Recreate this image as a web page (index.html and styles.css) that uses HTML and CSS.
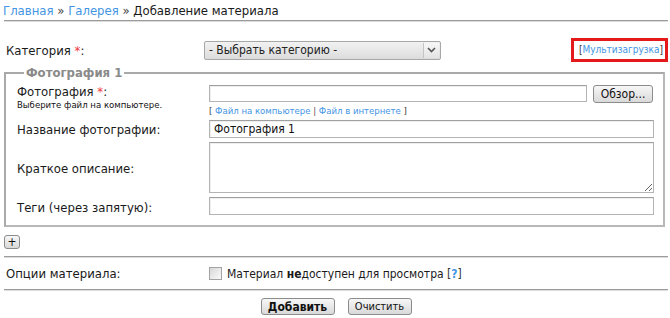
FILE: index.html
```html
<!DOCTYPE html>
<html>
<head>
    <meta charset="UTF-8">
    <title>Добавление материала</title>
    <link rel="stylesheet" href="styles.css">
</head>
<body>
    <div class="page">
        <div class="crumbs">
            <a href="#">Главная</a> <span class="sep">&raquo;</span> <a href="#">Галерея</a> <span class="sep">&raquo;</span> Добавление материала
        </div>
        <div class="rule"></div>

        <div class="cat-row">
            <label class="cat-label">Категория <span class="req">*</span>:</label>
            <div class="select">
                <span class="select-text">- Выбрать категорию -</span>
                <span class="select-arrow">
                    <svg width="9" height="6" viewBox="0 0 9 6"><path d="M1 1 L4.5 4.5 L8 1" fill="none" stroke="#555" stroke-width="1.6"/></svg>
                </span>
            </div>
            <div class="multi"><span class="br">[</span><a href="#">Мультизагрузка</a><span class="br">]</span></div>
        </div>

        <fieldset class="photo">
            <legend>Фотография 1</legend>
            <div class="grid">
                <div class="lbl lbl-top">
                    Фотография <span class="req">*</span>:
                    <div class="hint">Выберите файл на компьютере.</div>
                </div>
                <div class="file-field">
                    <div class="file-line">
                        <input type="text" class="inp file-inp">
                        <button class="btn browse">Обзор...</button>
                    </div>
                    <div class="src-links">
                        <span class="br">[</span> <a href="#">Файл на компьютере</a> <span class="pipe">|</span> <a href="#">Файл в интернете</a> <span class="br">]</span>
                    </div>
                </div>

                <label class="lbl">Название фотографии:</label>
                <input type="text" class="inp" value="Фотография 1">

                <label class="lbl">Краткое описание:</label>
                <textarea class="inp area"></textarea>

                <label class="lbl tags-lbl">Теги (через запятую):</label>
                <input type="text" class="inp tags">
            </div>
        </fieldset>

        <button class="btn plus">+</button>
        <div class="rule"></div>

        <div class="opt-row">
            <span class="opt-label">Опции материала:</span>
            <input type="checkbox" class="chk" id="hidden-mat">
            <label for="hidden-mat" class="opt-text">Материал <b>не</b>доступен для просмотра <span class="br">[</span><a href="#" class="q">?</a><span class="br">]</span></label>
        </div>
        <div class="rule"></div>

        <div class="actions">
            <button class="btn submit">Добавить</button>
            <button class="btn reset">Очистить</button>
        </div>
    </div>
</body>
</html>
```

FILE: styles.css
```css
:root {
    --link: #4395e4;
    --text: #1a1a1a;
    --line: #9c9c9c;
    --field-border: #b4b4b4;
}
body {
    margin: 0;
    font-family: "DejaVu Sans Condensed", "DejaVu Sans", Verdana, sans-serif;
    font-size: 13px;
    color: var(--text);
    background: #fff;
}
a { color: var(--link); text-decoration: none; }
.page { padding: 3px 2px 0 4px; }

.crumbs { line-height: 15px; height: 16px; margin-left: -1px; }
.crumbs .sep { color: #444; }

.rule {
    border-top: 1px solid var(--line);
    border-bottom: 1px solid #dcdcdc;
    margin: 0;
}
.crumbs + .rule { margin-top: 1px; }

.cat-row { display: flex; align-items: center; margin-top: 16px; height: 24px; }
.cat-label { width: 198px; padding-left: 2px; }
.req { color: #f03a3a; }
.select {
    width: 237px; height: 19px; box-sizing: border-box;
    border: 1px solid #a7a7a7; border-radius: 2px;
    background: linear-gradient(#f2f2f2, #dcdcdc);
    display: flex; align-items: center; justify-content: space-between;
    font-size: 12px; color: #222; padding-left: 4px;
}
.select-arrow {
    width: 15px; height: 15px; margin-right: 1px;
    border-left: 1px solid #c4c4c4; background: linear-gradient(#f7f7f7, #e3e3e3);
    display: flex; align-items: center; justify-content: center;
}
.multi {
    margin-left: auto; font-size: 10px;
    border: 3px solid #e41a1a; padding: 3px 2px 4px 5px;
}
.br { color: #333; }

.photo {
    margin: 3px 3px 0 0; padding: 5px 9px 10px 11px;
    border: 2px solid #a9a9a9;
    border-right-color: #b8b8b8; border-bottom-color: #b8b8b8;
}
.photo legend {
    font-weight: bold; color: #8a8a8a; padding: 0 2px; margin-left: 7px; line-height: 15px;
}
.grid {
    display: grid; grid-template-columns: 192px 445px;
    row-gap: 4px; align-items: center;
}
.lbl { padding-top: 1px; }
.lbl-top { align-self: start; line-height: 14px; margin-top: -1px; }
.hint { font-size: 9.5px; line-height: 11px; color: #111; }
.tags, .tags-lbl { margin-top: 2px; }

.inp {
    box-sizing: border-box; height: 18px; width: 100%; margin: 0;
    border: 1px solid var(--field-border); border-top-color: #a0a0a0;
    box-shadow: inset 1px 1px 0 #eee;
    font-family: inherit; font-size: 12px; padding: 0 4px; color: #111;
}
.area { height: 51px; resize: vertical; }
.file-line { display: flex; gap: 6px; }
.file-inp { width: 378px; height: 17px; }
.src-links { font-size: 9.5px; margin-top: 2px; line-height: 11px; }
.pipe { color: #555; }

.btn {
    font-family: inherit; color: #111;
    border: 1px solid #8c8c8c; border-radius: 3px;
    background: linear-gradient(#f7f7f7, #d9d9d9);
    padding: 0; cursor: pointer;
}
.browse { width: 60px; height: 18px; font-size: 12px; }
.plus { display: block; width: 16px; height: 14px; font-size: 12px; line-height: 10px; margin: 8px 0 7px 0; }

.opt-row { display: flex; align-items: center; height: 31px; }
.opt-label { width: 203px; padding-left: 2px; }
.chk {
    appearance: none; width: 13px; height: 13px; margin: 0 5px 0 0;
    border: 1px solid #a3a3a3; background: linear-gradient(135deg, #d8d8d8, #fafafa);
}
.opt-text { font-size: 12px; }
.q { font-weight: bold; }

.actions { display: flex; justify-content: center; gap: 13px; margin-top: 7px; }
.submit { width: 74px; height: 17px; font-weight: bold; font-size: 12px; }
.reset { width: 64px; height: 17px; font-size: 11px; }
```
